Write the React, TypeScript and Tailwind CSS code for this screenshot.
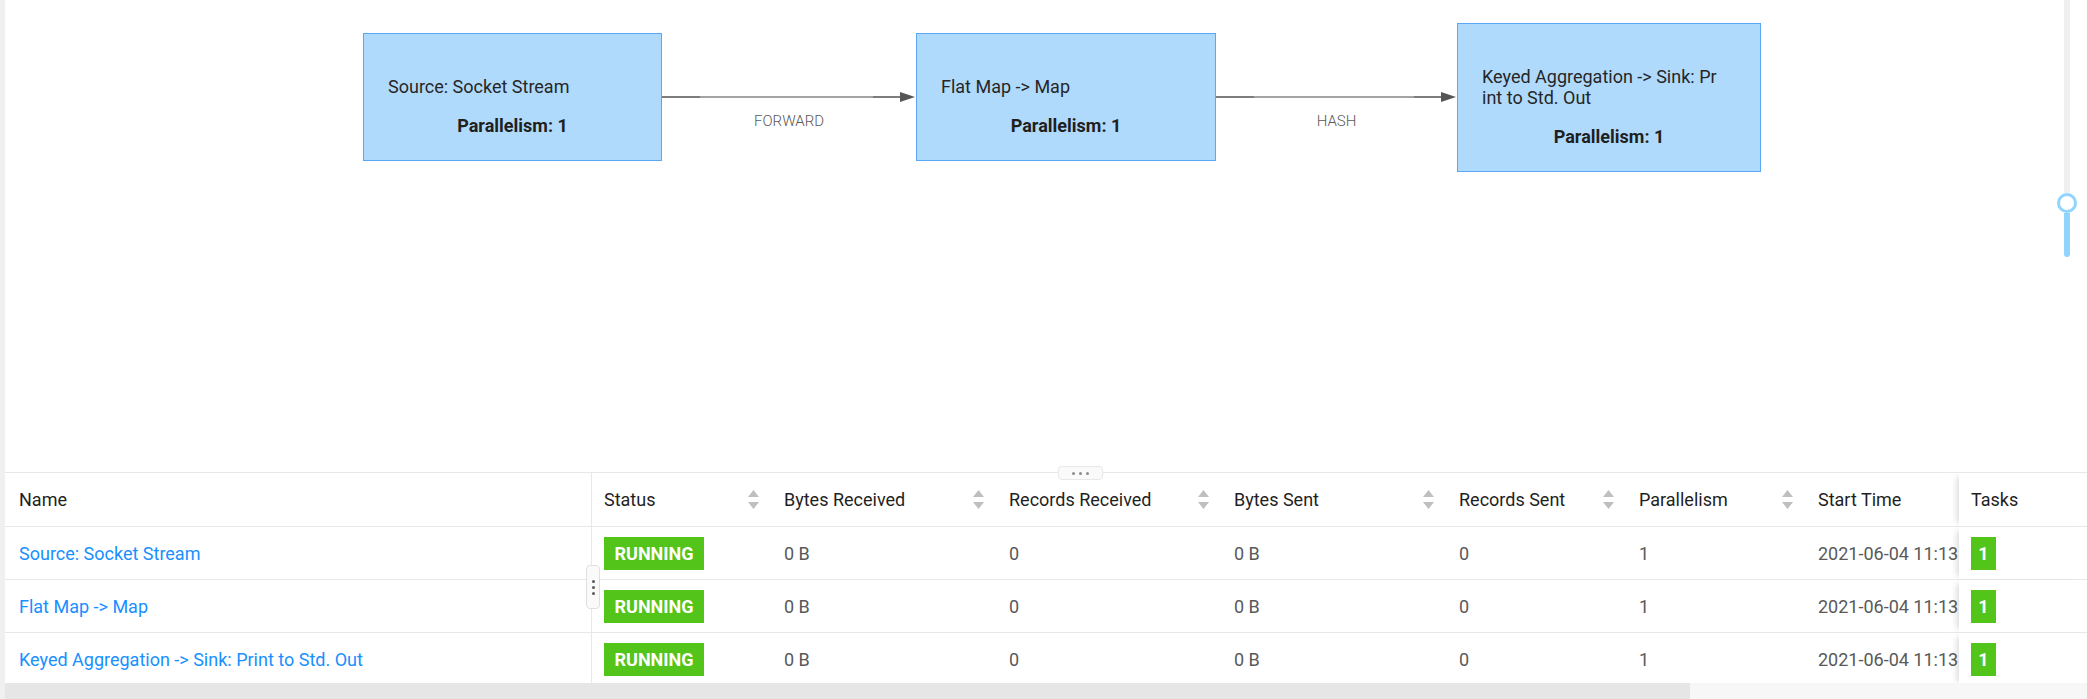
import React from 'react';

const ROWS = [
  { name: 'Source: Socket Stream' },
  { name: 'Flat Map -> Map' },
  { name: 'Keyed Aggregation -> Sink: Print to Std. Out' },
];

function SortIcon() {
  return (
    <svg width="11" height="19" viewBox="0 0 11 19" className="shrink-0">
      <polygon points="0,7 5.5,0 11,7" fill="#bfbfbf" />
      <polygon points="0,12 5.5,19 11,12" fill="#bfbfbf" />
    </svg>
  );
}

function GraphNode({ label, width }: { label: React.ReactNode; width: string }) {
  return (
    <div className={`${width} shrink-0 border border-[#5aa8f5] bg-[#b0dafc] px-[24px] pt-[42px] pb-[24px] text-[18px] leading-[21px] text-[#262626]`}>
      <div className="whitespace-nowrap">{label}</div>
      <div className="mt-[18px] text-center font-bold text-[#1f1f1f]">Parallelism: 1</div>
    </div>
  );
}

function Edge({ width, w, label }: { width: string; w: number; label: string }) {
  return (
    <div className={`${width} shrink-0 self-stretch flex flex-col`}>
      <svg className="mt-[92px] h-[10px] w-full" viewBox={`0 0 ${w} 10`} preserveAspectRatio="none">
        <line x1="0" y1="5" x2="38" y2="5" stroke="#7d7d7d" strokeWidth="2" />
        <line x1="38" y1="5" x2={w - 43} y2="5" stroke="#a3a3a3" strokeWidth="2" />
        <line x1={w - 43} y1="5" x2={w - 14} y2="5" stroke="#7d7d7d" strokeWidth="2" />
        <polygon points={`${w - 16},0 ${w - 1},5 ${w - 16},10`} fill="#555555" />
      </svg>
      <div className="mt-[11px] text-center text-[15px] leading-[16px] font-light text-[#595959]">{label}</div>
    </div>
  );
}

function HeadCell({ title, sort = true }: { title: string; sort?: boolean }) {
  return (
    <div className="flex items-center justify-between pl-[12px] pr-[13px] border-b border-[#e8e8e8] text-[#1f1f1f] whitespace-nowrap overflow-hidden">
      <span>{title}</span>
      {sort && <SortIcon />}
    </div>
  );
}

function Cell({ children, className = '' }: { children: React.ReactNode; className?: string }) {
  return (
    <div className={`flex items-center pl-[12px] border-b border-[#e8e8e8] text-[#595959] whitespace-nowrap overflow-hidden ${className}`}>
      {children}
    </div>
  );
}

export default function App() {
  return (
    <div className="flex h-[699px] w-[2087px] overflow-hidden bg-white font-['Roboto',sans-serif] text-[18px]">
      <div className="w-[5px] shrink-0 bg-[#f0f0f0]" />
      <div className="flex min-w-0 flex-1 flex-col">
        {/* job graph */}
        <div className="relative h-[472px] shrink-0">
          <div className="flex h-[194px] items-center pl-[358px]">
            <GraphNode width="w-[299px]" label="Source: Socket Stream" />
            <Edge width="w-[254px]" w={254} label="FORWARD" />
            <GraphNode width="w-[300px]" label="Flat Map -> Map" />
            <Edge width="w-[241px]" w={241} label="HASH" />
            <GraphNode
              width="w-[304px]"
              label={
                <>
                  Keyed Aggregation -&gt; Sink: Pr
                  <br />
                  int to Std. Out
                </>
              }
            />
          </div>
          {/* zoom slider */}
          <div className="absolute right-[10px] top-0 flex w-[20px] flex-col items-center">
            <div className="h-[193px] w-[6px] bg-[#f0f0f0]" />
            <div className="h-[20px] w-[20px] rounded-full border-[3px] border-[#91d5ff] bg-white" />
            <div className="h-[44px] w-[6px] rounded-b-full bg-[#91d5ff]" />
          </div>
        </div>

        {/* vertex table */}
        <div className="relative h-[211px] shrink-0 border-t border-[#e8e8e8]">
          <div className="absolute left-[1053px] top-[-7px] z-10 flex h-[14px] w-[45px] items-center justify-center gap-[4px] rounded-[4px] border border-[#e8e8e8] bg-[#fafafa]">
            <span className="h-[3px] w-[3px] rounded-full bg-[#8c8c8c]" />
            <span className="h-[3px] w-[3px] rounded-full bg-[#8c8c8c]" />
            <span className="h-[3px] w-[3px] rounded-full bg-[#8c8c8c]" />
          </div>
          <div className="absolute left-[581px] top-[92px] z-10 flex h-[44px] w-[14px] flex-col items-center justify-center gap-[3px] rounded-[4px] border border-[#e0e0e0] bg-[#fafafa]">
            <span className="h-[3px] w-[3px] rounded-full bg-[#595959]" />
            <span className="h-[3px] w-[3px] rounded-full bg-[#595959]" />
            <span className="h-[3px] w-[3px] rounded-full bg-[#595959]" />
          </div>

          <div className="grid h-full grid-cols-[587px_180px_225px_225px_225px_180px_179px_153px_128px] grid-rows-[54px_53px_53px_53px] overflow-hidden">
            <div className="flex items-center pl-[14px] border-b border-r border-[#e8e8e8] text-[#1f1f1f]">Name</div>
            <HeadCell title="Status" />
            <HeadCell title="Bytes Received" />
            <HeadCell title="Records Received" />
            <HeadCell title="Bytes Sent" />
            <HeadCell title="Records Sent" />
            <HeadCell title="Parallelism" />
            <HeadCell title="Start Time" sort={false} />
            <div className="relative flex items-center pl-[12px] border-b border-[#e8e8e8] bg-white text-[#1f1f1f] shadow-[-6px_0_6px_-4px_rgba(0,0,0,0.15)]">
              Tasks
            </div>

            {ROWS.map((row) => (
              <React.Fragment key={row.name}>
                <div className="flex items-center pl-[14px] border-b border-r border-[#e8e8e8] text-[#1890ff] whitespace-nowrap">
                  {row.name}
                </div>
                <Cell>
                  <span className="inline-flex h-[33px] w-[100px] items-center justify-center bg-[#52c41a] font-bold text-white">
                    RUNNING
                  </span>
                </Cell>
                <Cell>0 B</Cell>
                <Cell>0</Cell>
                <Cell>0 B</Cell>
                <Cell>0</Cell>
                <Cell>1</Cell>
                <Cell>2021-06-04 11:13</Cell>
                <div className="relative flex items-center pl-[12px] border-b border-[#e8e8e8] bg-white shadow-[-6px_0_6px_-4px_rgba(0,0,0,0.15)]">
                  <span className="inline-flex h-[33px] w-[25px] items-center justify-center bg-[#52c41a] font-bold text-white">
                    1
                  </span>
                </div>
              </React.Fragment>
            ))}
          </div>
        </div>

        {/* horizontal scrollbar */}
        <div className="flex h-[16px] shrink-0">
          <div className="w-[1685px] bg-[#e6e6e6]" />
          <div className="flex-1 bg-[#f7f7f7]" />
        </div>
      </div>
    </div>
  );
}
